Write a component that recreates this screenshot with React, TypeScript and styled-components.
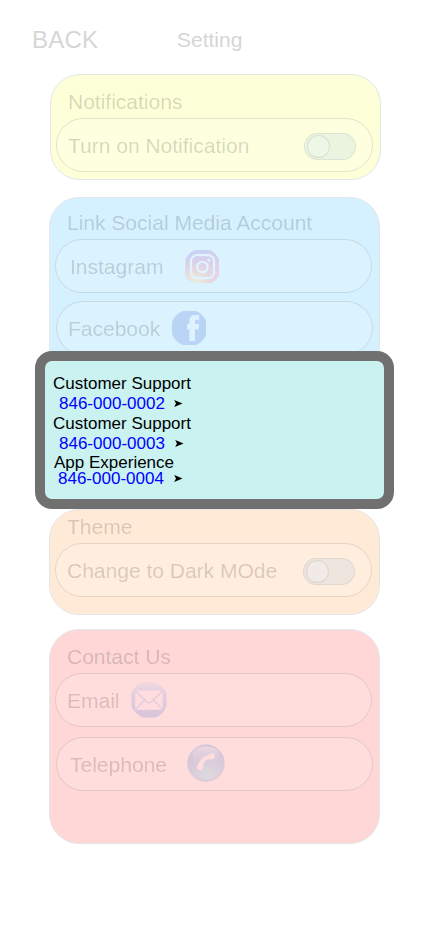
import React from "react";
import styled, { createGlobalStyle } from "styled-components";

const GlobalStyle = createGlobalStyle`
  * { box-sizing: border-box; }
  body { margin: 0; background: #fff; font-family: "Liberation Sans", Arial, sans-serif; }
`;

const Page = styled.main`
  position: relative;
  width: 428px;
  height: 926px;
  overflow: hidden;
  display: flex;
  flex-direction: column;
`;

const Header = styled.header`
  display: flex;
  align-items: center;
  height: 74px;
  padding: 5px 0 0 32px;
  color: #d6d6d6;
`;

const Back = styled.span`
  width: 145px;
  font-size: 24px;
  line-height: 28px;
  letter-spacing: 0.25px;
`;

const Title = styled.h1`
  margin: 0;
  font-size: 21px;
  line-height: 24px;
  font-weight: 400;
`;

const Card = styled.section<{ $fill: string; $height: number; $inset?: number; $gap?: number; $top?: number }>`
  flex: none;
  width: 331px;
  height: ${(p) => p.$height}px;
  margin: 0 0 ${(p) => p.$gap ?? 0}px ${(p) => p.$inset ?? 49}px;
  padding: ${(p) => p.$top ?? 15}px 0 0 5px;
  background: ${(p) => p.$fill};
  border: 1px solid #e4e6e8;
  border-radius: 30px;
`;

const CardTitle = styled.h2`
  margin: 0 0 4px 12px;
  font-size: 21px;
  line-height: 24px;
  font-weight: 400;
  color: rgba(0, 0, 0, 0.16);
`;

const Row = styled.div<{ $shift?: number; $gap?: number; $pad?: number }>`
  display: flex;
  align-items: center;
  width: 317px;
  height: 54px;
  margin: ${(p) => p.$gap ?? 0}px 0 0 ${(p) => p.$shift ?? 0}px;
  padding: 0 16px 0 ${(p) => p.$pad ?? 11}px;
  background: rgba(255, 255, 255, 0.16);
  border: 1px solid rgba(0, 0, 0, 0.1);
  border-radius: 27px;
`;

const Label = styled.span<{ $width?: number }>`
  width: ${(p) => (p.$width ? `${p.$width}px` : "auto")};
  flex: none;
  margin-top: 2px;
  font-size: 21px;
  line-height: 24px;
  white-space: nowrap;
  color: rgba(0, 0, 0, 0.16);
`;

const Switch = styled.span<{ $fill: string }>`
  display: flex;
  align-items: center;
  width: 52px;
  height: 27px;
  margin: 3px 0 0 auto;
  padding-left: 2px;
  border: 1px solid rgba(0, 0, 0, 0.06);
  border-radius: 14px;
  background: ${(p) => p.$fill};
`;

const Knob = styled.span`
  width: 23px;
  height: 23px;
  border: 1px solid rgba(70, 80, 80, 0.13);
  border-radius: 50%;
  background: rgba(255, 255, 255, 0.22);
`;

const IconSvg = styled.svg<{ $nudge?: number }>`
  display: block;
  flex: none;
  margin-top: ${(p) => p.$nudge ?? 0}px;
`;

const Dialog = styled.aside`
  position: absolute;
  left: 35px;
  top: 351px;
  width: 359px;
  height: 158px;
  padding: 13px 8px;
  border: 10px solid #707070;
  border-radius: 17px;
  background: #c9f2f1;
  font-size: 17px;
  line-height: 20px;
`;

const Contact = styled.div<{ $indent?: number; $height?: number }>`
  height: ${(p) => p.$height ?? 40}px;
  padding-left: ${(p) => p.$indent ?? 0}px;
  color: #000;
`;

const Department = styled.div`
  white-space: nowrap;
`;

const Phone = styled.a<{ $indent: number; $gap: number }>`
  display: flex;
  align-items: center;
  gap: ${(p) => p.$gap}px;
  padding-left: ${(p) => p.$indent}px;
  color: #0000ff;
  text-decoration: none;
`;

const CompactContact = styled(Contact)`
  padding-top: 2px;
  line-height: 16px;
`;

const InstagramIcon = () => (
  <IconSvg width="34" height="34" viewBox="0 0 34 34" $nudge={2}>
    <defs>
      <linearGradient id="igBase" x1="0.2" y1="0" x2="0.65" y2="1">
        <stop offset="0" stopColor="#c8d2f8" />
        <stop offset="0.48" stopColor="#d8cfea" />
        <stop offset="1" stopColor="#e7d7e3" />
      </linearGradient>
      <radialGradient id="igWarm" cx="0.28" cy="1" r="0.85">
        <stop offset="0" stopColor="#e8efe0" />
        <stop offset="0.35" stopColor="#e8e0dd" />
        <stop offset="1" stopColor="#e1d0e6" stopOpacity="0" />
      </radialGradient>
    </defs>
    <path d="M10 0h15q4 1 9 9v16q-2 5-8 8H9q-6-2-8.500-8V9q3-6 9.500-9z" fill="url(#igBase)" />
    <path d="M10 0h15q4 1 9 9v16q-2 5-8 8H9q-6-2-8.500-8V9q3-6 9.500-9z" fill="url(#igWarm)" />
    <rect x="6" y="5.200" width="23" height="23" rx="6" fill="none" stroke="#e1f3ff" strokeWidth="2.200" />
    <circle cx="17.400" cy="17" r="5.200" fill="none" stroke="#e1f3ff" strokeWidth="2.200" />
    <circle cx="23.800" cy="10.200" r="1.500" fill="#e1f3ff" />
  </IconSvg>
);

const FacebookIcon = () => (
  <IconSvg width="34" height="34" viewBox="0 0 34 34">
    <path d="M11 0h13q7 3 10 10v14q-3 7-10 10H11Q3 31 0 23V11Q3 3 11 0z" fill="#b9d4f5" />
    <path d="M17.400 30V18.500H15V13h2.400V9.600c0-3.800 2.300-5.700 6-5.700h3.800v4.800h-2.500c-1.400 0-1.800.8-1.800 2V13h4.200l-.6 5.500h-3.600V30z" fill="#def3ff" />
  </IconSvg>
);

const EmailIcon = () => (
  <IconSvg width="36" height="36" viewBox="0 0 36 36">
    <defs>
      <linearGradient id="mailFill" x1="0" y1="0" x2="0" y2="1">
        <stop offset="0" stopColor="#f4d9df" />
        <stop offset="0.25" stopColor="#e4d0e1" />
        <stop offset="1" stopColor="#d8c4da" />
      </linearGradient>
    </defs>
    <path d="M12 0h12q8 3 11.500 11v13q-3 8-10.500 11.500H12Q4 32 .5 24.500V11Q4 3 12 0z" fill="url(#mailFill)" />
    <rect x="4.200" y="8.500" width="27.500" height="19.300" fill="#ffdddf" />
    <path d="M4.400 8.700l11.100 11q2.500 2.400 5 0l11.100-11M4.400 27.600l9.200-9.700M31.600 27.600l-9.200-9.700" fill="none" stroke="#decade" strokeWidth="1.200" />
  </IconSvg>
);

const TelephoneIcon = () => (
  <IconSvg width="40" height="40" viewBox="0 0 40 40" $nudge={-2}>
    <defs>
      <radialGradient id="phoneFill" cx="0.55" cy="0.85" r="0.85">
        <stop offset="0" stopColor="#dddade" />
        <stop offset="0.5" stopColor="#dacdda" />
        <stop offset="1" stopColor="#d7c2d7" />
      </radialGradient>
      <linearGradient id="phoneShine" x1="0" y1="0" x2="0" y2="1">
        <stop offset="0" stopColor="#ecd8e3" />
        <stop offset="1" stopColor="#dccadc" stopOpacity="0.4" />
      </linearGradient>
    </defs>
    <circle cx="20" cy="20.500" r="19" fill="#edd2d9" opacity="0.6" />
    <circle cx="20" cy="20" r="18" fill="url(#phoneFill)" stroke="#d8c6da" />
    <ellipse cx="20" cy="11.500" rx="13.500" ry="8" fill="url(#phoneShine)" />
    <path d="M22.500 12l3.700-1.700c.9-.4 1.400 0 1.700.8l.7 2.500c.2 1-.2 1.700-1.100 2l-3 .8c-.9.200-1.400-.3-1.900-.8-2.800 1.400-4.800 3.500-6 6 .8.500 1.300 1.100.9 2l-1.600 2.900c-.5.800-1.200 1-2 .6l-2-1c-.9-.5-1.100-1.200-.8-2l1.400-3.200c2-4.300 5-7.200 10-8.900z" fill="#ffdddd" stroke="#ffdddd" strokeWidth=".5" />
  </IconSvg>
);

const Arrow = () => (
  <IconSvg width="9" height="7" viewBox="0 0 9 7" $nudge={-2}>
    <path d="M.2 0L8.500 3.500.2 7l1.800-3.500z" fill="#000" />
  </IconSvg>
);

export default function App() {
  return (
    <>
      <GlobalStyle />
      <Page>
        <Header>
          <Back>BACK</Back>
          <Title>Setting</Title>
        </Header>

        <Card $fill="#fdffd8" $height={106} $inset={50} $gap={17}>
          <CardTitle>Notifications</CardTitle>
          <Row>
            <Label>Turn on Notification</Label>
            <Switch $fill="#eaf4df"><Knob /></Switch>
          </Row>
        </Card>

        <Card $fill="#d5f1ff" $height={218} $gap={94} $top={13}>
          <CardTitle>Link Social Media Account</CardTitle>
          <Row $pad={14}>
            <Label $width={115}>Instagram</Label>
            <InstagramIcon />
          </Row>
          <Row $gap={8} $shift={1}>
            <Label $width={104}>Facebook</Label>
            <FacebookIcon />
          </Row>
        </Card>

        <Card $fill="#ffead8" $height={106} $gap={14} $top={5}>
          <CardTitle>Theme</CardTitle>
          <Row>
            <Label>Change to Dark MOde</Label>
            <Switch $fill="#eee5df"><Knob /></Switch>
          </Row>
        </Card>

        <Card $fill="#ffd7d7" $height={215}>
          <CardTitle>Contact Us</CardTitle>
          <Row>
            <Label $width={64}>Email</Label>
            <EmailIcon />
          </Row>
          <Row $gap={10} $shift={1} $pad={13}>
            <Label $width={116}>Telephone</Label>
            <TelephoneIcon />
          </Row>
        </Card>

        <Dialog>
          <Contact>
            <Department>Customer Support</Department>
            <Phone $indent={6} $gap={9}>846-000-0002 <Arrow /></Phone>
          </Contact>
          <Contact $height={39}>
            <Department>Customer Support</Department>
            <Phone $indent={6} $gap={10}>846-000-0003 <Arrow /></Phone>
          </Contact>
          <CompactContact $indent={1}>
            <Department>App Experience</Department>
            <Phone $indent={4} $gap={10}>846-000-0004 <Arrow /></Phone>
          </CompactContact>
        </Dialog>
      </Page>
    </>
  );
}
